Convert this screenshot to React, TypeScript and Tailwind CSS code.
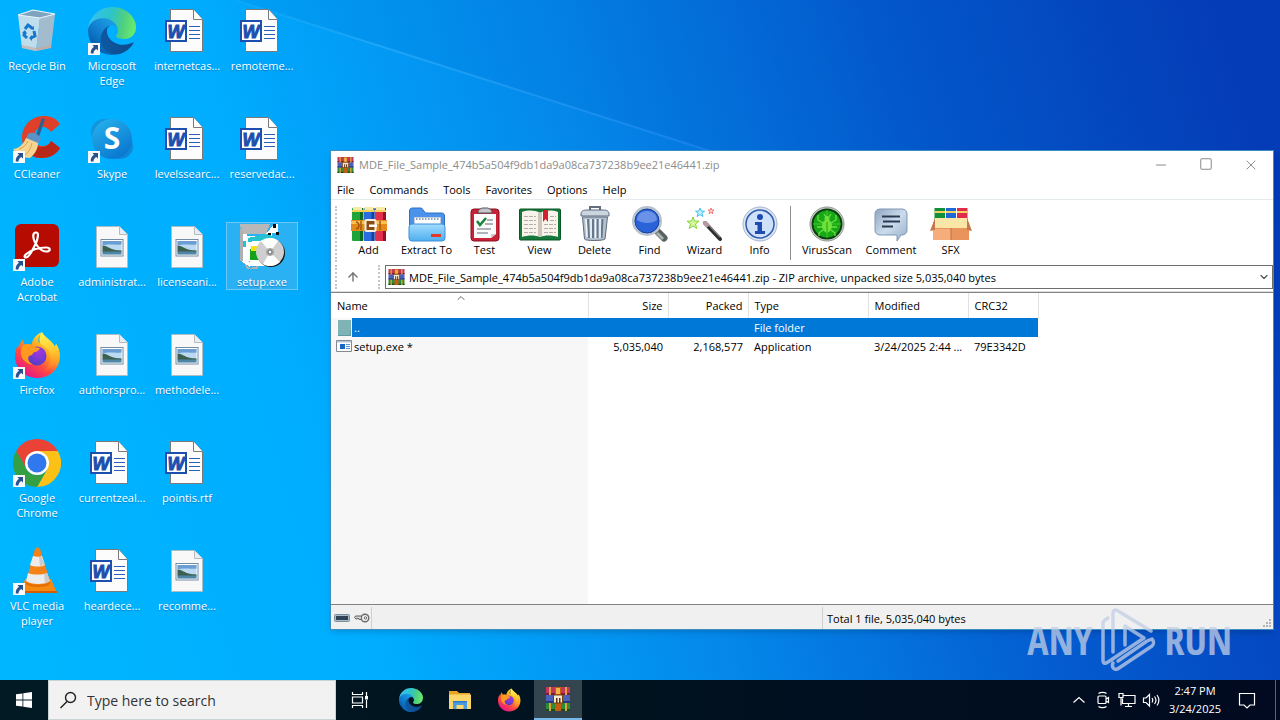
import type { ComponentType, ReactNode } from 'react';
import { ArrowUp, ChevronDown, ChevronUp, Minus, Square, X } from 'lucide-react';

const ARCHIVE_NAME = 'MDE_File_Sample_474b5a504f9db1da9a08ca737238b9ee21e46441.zip';

type IconProps = { className?: string };

/* ---------- App icons ---------- */

function EdgeIcon({ className }: IconProps) {
  return (
    <svg viewBox="0 0 256 256" className={className} aria-hidden="true">
      <defs>
        <linearGradient id="edgeDark" x1="63" y1="177" x2="241" y2="177" gradientUnits="userSpaceOnUse">
          <stop offset="0" stopColor="#0c59a4" />
          <stop offset="1" stopColor="#114a8b" />
        </linearGradient>
        <linearGradient id="edgeMid" x1="157" y1="100" x2="46" y2="221" gradientUnits="userSpaceOnUse">
          <stop offset="0" stopColor="#1b9de2" />
          <stop offset="0.4" stopColor="#1587d6" />
          <stop offset="1" stopColor="#0560b0" />
        </linearGradient>
        <linearGradient id="edgeTop" x1="10" y1="60" x2="245" y2="110" gradientUnits="userSpaceOnUse">
          <stop offset="0" stopColor="#35c1f1" />
          <stop offset="0.45" stopColor="#2dc4c8" />
          <stop offset="0.75" stopColor="#4fcf80" />
          <stop offset="1" stopColor="#66eb6e" />
        </linearGradient>
      </defs>
      <path
        fill="url(#edgeDark)"
        d="M235.68 190.5a93.73 93.73 0 0 1-10.54 4.71 101.87 101.87 0 0 1-35.9 6.46c-47.32 0-88.54-32.55-88.54-74.32A31.48 31.48 0 0 1 117.13 100c-42.8 1.8-53.8 46.4-53.8 72.53 0 73.88 68.09 81.37 82.76 81.37 7.91 0 19.84-2.3 27-4.56l1.31-.44a128.34 128.34 0 0 0 66.6-52.8 4 4 0 0 0-5.32-5.6Z"
      />
      <path
        fill="url(#edgeMid)"
        d="M105.73 241.42a79.2 79.2 0 0 1-22.74-21.34 80.72 80.72 0 0 1 29.53-120c3.12-1.47 8.45-4.05 15.54-3.95a32.35 32.35 0 0 1 25.69 13 31.88 31.88 0 0 1 6.36 18.66c0-.21 24.46-79.6-80-79.6-43.9 0-80 41.66-80 78.21a130.15 130.15 0 0 0 12.11 56 128 128 0 0 0 156.38 67.11 75.55 75.55 0 0 1-62.78-8.09Z"
      />
      <path
        fill="url(#edgeTop)"
        d="M152.33 148.86c-.81 1.05-3.3 2.5-3.3 5.66 0 2.61 1.7 5.12 4.72 7.23 14.38 10 41.49 8.68 41.56 8.68a59.56 59.56 0 0 0 30.27-8.35 61.38 61.38 0 0 0 30.43-52.88c.26-22.41-8-37.31-11.34-43.91C223.46 23.84 177.72 0 128 0A128 128 0 0 0 0 126.2c.48-36.54 36.8-66.05 80-66.05 3.5 0 23.46.34 42 10.07 16.34 8.58 24.9 18.94 30.85 29.21 6.18 10.67 7.28 24.15 7.28 29.52s-2.74 13.33-7.78 19.91Z"
      />
    </svg>
  );
}

function FirefoxIcon({ className }: IconProps) {
  return (
    <svg viewBox="0 0 48 48" className={className} aria-hidden="true">
      <defs>
        <linearGradient id="ffBody" x1="38" y1="6" x2="12" y2="44" gradientUnits="userSpaceOnUse">
          <stop offset="0" stopColor="#ffe83a" />
          <stop offset="0.35" stopColor="#ffa61e" />
          <stop offset="0.65" stopColor="#ff4a41" />
          <stop offset="1" stopColor="#e61587" />
        </linearGradient>
        <linearGradient id="ffFlame" x1="32" y1="2" x2="42" y2="40" gradientUnits="userSpaceOnUse">
          <stop offset="0" stopColor="#fff44f" />
          <stop offset="0.5" stopColor="#ffc530" />
          <stop offset="1" stopColor="#ff7a28" stopOpacity="0.2" />
        </linearGradient>
        <radialGradient id="ffGlobe" cx="0.6" cy="0.3" r="0.8">
          <stop offset="0" stopColor="#a236e0" />
          <stop offset="1" stopColor="#4a3fc4" />
        </radialGradient>
      </defs>
      <path
        fill="url(#ffBody)"
        d="M29 1c-2 3-4 5-3.500 10 3 .8 5.500 2 7.500 5l3-7c2.500 1.500 4.500 4 5.500 6.500 1-1 1.500-2 1.500-3 3.500 5 4.500 11 3.500 16.500C44.500 40 35.500 47 24.500 47 12 47 2 37.500 2 25c0-4.500 1.500-8.500 3-11.500l.8 3C6.500 13 8 10.500 10 8.500c0 2 .5 3.500 1.500 5 2-.8 4.500-.8 7 0 1-3.500 3-9.500 10.500-12.500Z"
      />
      <path
        fill="url(#ffFlame)"
        d="M29 1c2 4 6 6 8.500 9 5 5.500 8 10 8 17-2 7-8 12-15 13 5-4 8-9 7-15-1-7-6-9-10-12-2-4-1-9 1.500-12Z"
      />
      <circle cx="24" cy="25" r="9.500" fill="url(#ffGlobe)" />
      <path
        fill="#ff9a1f"
        d="M10 14c4-1.500 8-.5 11 2l6 1c-1 3-4 4-6.500 4.500-.5 2-2 3-4.500 3.500-2 3 0 7 4 8.500-6 0-11-4.500-12-10-.4-3.500.3-6.500 2-9.500Z"
      />
    </svg>
  );
}

function ChromeIcon({ className }: IconProps) {
  return (
    <svg viewBox="0 0 48 48" className={className} aria-hidden="true">
      <path fill="#ea4335" d="M24 24 3.200 12A24 24 0 0 1 44.800 12Z" />
      <path fill="#fbc116" d="M24 12H44.800A24 24 0 0 1 24 48L34.400 30Z" />
      <path fill="#ea4335" d="M3.200 12 13.600 30 24 24V12Z" />
      <path fill="#34a043" d="M3.200 12 13.600 30A12 12 0 0 0 34.400 30L24 48A24 24 0 0 1 3.200 12Z" />
      <circle cx="24" cy="24" r="12" fill="#fff" />
      <circle cx="24" cy="24" r="9.500" fill="#2f78ee" />
    </svg>
  );
}

function RecycleBinIcon({ className }: IconProps) {
  return (
    <svg viewBox="0 0 48 48" className={className} aria-hidden="true">
      <path fill="#dfe5ea" fillOpacity="0.85" d="M5 8 27 11 23 44 9 41Z" />
      <path fill="#b5bec8" fillOpacity="0.9" d="M27 11 42 7 38 41 23 44Z" />
      <path fill="#c9a79a" fillOpacity="0.6" d="M9 38 23 41 38 38 38 41 23 44 9 41Z" />
      <path fill="#7fa4c0" d="M5 8 20 3 42 7 27 11Z" />
      <path fill="none" stroke="#eef5fa" strokeWidth="1.200" d="M5 8 20 3 42 7 27 11Z" />
      <g fill="none" stroke="#1577cd" strokeWidth="3">
        <path d="m12 22 3-4 4 3" />
        <path d="m21 24 1 5-4 2" />
        <path d="m14 31-3-3 1-3" />
      </g>
      <path fill="#1577cd" d="m17 22 4 1 0-4ZM19 28v6l-3-3ZM9 26l3-3 2 4Z" />
    </svg>
  );
}

function CCleanerIcon({ className }: IconProps) {
  return (
    <svg viewBox="0 0 48 48" className={className} aria-hidden="true">
      <path
        fill="#e0402a"
        d="M47 9C43 3 37 1 31 1 18 1 9 11 9 23c0 12 8 20 19 20 8 0 15-3 19-10l-9-7c-2 4-5 5-9 5-5 0-8-4-8-9 0-6 4-10 9-10 3 0 6 2 8 5Z"
      />
      <path fill="#b92716" d="M47 33c-4 7-11 10-19 10-4 0-7-1-10-3l6-9c1 .7 3 1 5 1 4 0 7-2 9-6Z" />
      <path fill="none" stroke="#31608d" strokeWidth="3.500" strokeLinecap="round" d="M30 5 24 22" />
      <path fill="#5b93c8" d="M15 19c4-3 11 0 13 5l-3 5-12-5Z" />
      <path fill="#f7d590" d="m13 23 12 5c0 6-3 11-8 15-7 0-13-3-17-9 5 0 10-4 13-11Z" />
      <path fill="none" stroke="#d9a64e" d="M6 34c4-1 7-4 9-8m-3 14c4-3 6-7 7-12" />
    </svg>
  );
}

function SkypeIcon({ className }: IconProps) {
  return (
    <svg viewBox="0 0 48 48" className={className} aria-hidden="true">
      <defs>
        <linearGradient id="skypeBg" x1="0" y1="0" x2="0.6" y2="1">
          <stop offset="0" stopColor="#28b5ee" />
          <stop offset="1" stopColor="#0a79d0" />
        </linearGradient>
      </defs>
      <circle cx="16" cy="17" r="13" fill="#1494dd" />
      <circle cx="32" cy="31" r="13" fill="#1087d6" />
      <circle cx="24" cy="24" r="20" fill="url(#skypeBg)" />
      <text x="24" y="34" textAnchor="middle" fill="#fff" fontFamily="Open Sans" fontWeight="700" fontSize="30">
        S
      </text>
    </svg>
  );
}

function AcrobatIcon({ className }: IconProps) {
  return (
    <svg viewBox="0 0 48 48" className={className} aria-hidden="true">
      <rect x="2" y="1" width="44" height="43" rx="6" fill="#b50b00" />
      <path
        fill="none"
        stroke="#fff"
        strokeWidth="2.200"
        d="M23 9.500c-4 0-3 6-1 10 3 5 7 9 11 9 5 0 5-4 0-4-6 0-14 2-19 6-3 2-3 4-1 4 3 0 8-10 11-17 1-4 2-8-1-8Z"
      />
    </svg>
  );
}

function VlcIcon({ className }: IconProps) {
  return (
    <svg viewBox="0 0 48 48" className={className} aria-hidden="true">
      <path fill="#f68a10" d="M12 32h26l6 14H8Z" />
      <path fill="#d45c00" d="M8 44h36v2H7Z" />
      <path fill="#e46d05" d="M13 34h24v3c-3 4-21 4-24 0Z" />
      <path fill="#f58216" d="M22 2c1-2 4-2 5 0l10 32c-3 5-21 5-24 0Z" />
      <path fill="#ececec" d="M20 9c3 1 7 1 9 0l3 9c-3 2-11 2-15 0ZM15 26c5 2 14 2 19 0l3 8c-5 4-19 4-24 0Z" />
      <path fill="#bdbdbd" d="m28 9 4 9-5 1-1-9Zm3 18 3-1 3 8-5 3Z" opacity="0.7" />
    </svg>
  );
}

function WordDocIcon({ className }: IconProps) {
  return (
    <svg viewBox="0 0 48 48" className={className} aria-hidden="true">
      <path fill="#fcfcfc" stroke="#7a7a7a" d="M7.500 2.500h23l9 10v32h-32Z" />
      <path fill="#fff" stroke="#7a7a7a" d="M30.500 2.500v10h9" />
      <path stroke="#2b5fb8" strokeWidth="1.200" d="M26 19.500h11M26 23.500h11M26 27.500h11M26 31.500h11" />
      <rect x="3" y="14" width="20" height="20" fill="#fff" stroke="#1d4fae" strokeWidth="2" />
      <text
        x="13"
        y="30.500"
        textAnchor="middle"
        fill="#1d4fae"
        stroke="#1d4fae"
        fontFamily="Liberation Sans"
        fontStyle="italic"
        fontWeight="700"
        fontSize="18"
      >
        W
      </text>
    </svg>
  );
}

function ImageDocIcon({ className }: IconProps) {
  return (
    <svg viewBox="0 0 48 48" className={className} aria-hidden="true">
      <path fill="#f8f8f8" stroke="#b9b9b9" strokeWidth="0.800" d="M8.500 3.500h23l8 8v33h-31Z" />
      <path fill="#e3eef6" stroke="#b9b9b9" d="M31.500 3.500v8h8" />
      <rect x="13" y="16.500" width="22" height="16.500" fill="#fff" stroke="#748ca5" />
      <rect x="14.500" y="18" width="19" height="13.500" fill="#b9daf0" />
      <path fill="#6b9fd3" d="M14.500 18h19v3.500c-7 1-12-1-19 1Z" />
      <path fill="#3c5f50" d="M14.500 22.500c4 0 7 3 11 4 3 .8 5 .8 8 1v1.500h-19Z" />
      <path fill="#4f86a5" d="M14.500 28.500h19v3h-19Z" />
    </svg>
  );
}

function SetupIcon({ className }: IconProps) {
  return (
    <svg viewBox="0 0 48 48" className={className} aria-hidden="true" shapeRendering="crispEdges">
      <path fill="#b8b8b8" d="M2 1h30l-4 10H4Z" />
      <path fill="#fff" d="M2 11h7l3 33-8-5ZM28 11l8-10h4v9h-6v6h-6ZM9 13h19v30H12Z" />
      <path fill="#b0b0b0" d="M2 5h3v33H2ZM6 40l6 5 8-2v3H9Z" />
      <path fill="#0b0b0b" d="M35 1h3v4h-3Zm3 8h3v3h-3ZM30 10h3v5h-3Z" />
      <path fill="#25c2cf" d="M5 18h3v6H5Zm5-3 18-4 9 3v2l-27 3Z" />
      <path fill="#13a31b" d="M12 26h10v11H12Z" />
      <path fill="#f1e210" d="M13 23h10v5H13Z" />
      <g shapeRendering="auto">
        <circle cx="33" cy="30" r="14" fill="#151515" />
        <circle cx="32" cy="29" r="14" fill="#cfcfcf" />
        <path fill="#fff" d="M32 29 23 18c5-4 13-4 17 0ZM32 29 42 39c-5 5-12 5-17 2Z" />
        <circle cx="32" cy="29" r="4" fill="#a9a9a9" />
        <circle cx="32" cy="29" r="2" fill="#fff" stroke="#666" />
      </g>
    </svg>
  );
}

// Stack of three tied books, used for the archive and in the title bar
function WinRarIcon({ className }: IconProps) {
  return (
    <svg viewBox="0 0 24 24" className={className} aria-hidden="true">
      <path fill="#c2355c" d="M0 0h24v8H0Z" />
      <path fill="#4a62b8" d="M0 8h24v8H0Z" />
      <path fill="#2f8c34" d="M0 16h24v8H0Z" />
      <path fill="#7d1d3a" d="M0 6h24v2H0Z" />
      <path fill="#27397e" d="M0 14h24v2H0Z" />
      <path fill="#154f1b" d="M0 22h24v2H0Z" />
      <path fill="#e0a33c" d="M3 0h2v8H3Zm16 0h2v8h-2ZM3 16h2v8H3Zm16 0h2v8h-2Z" />
      <path fill="#c45d12" d="M9 0h6v24H9Z" />
      <path fill="#f4b445" d="M10 1h4v6h-4Z" />
      <rect x="7.500" y="8" width="9" height="8" fill="#f6ead2" stroke="#744012" />
      <path fill="#61300c" d="M10 11h1.500v5H10Zm3 0h1.500v5H13Z" />
    </svg>
  );
}

function ShortcutArrow() {
  return (
    <svg viewBox="0 0 12 12" className="absolute bottom-0 left-0 h-3 w-3" aria-hidden="true">
      <path fill="#f7f9fb" d="M0 0h12v12H0Z" />
      <path fill="#27518f" d="M4.500 2H10v5.500L8.300 6C6.500 7 5.500 8.500 5.500 10.500H2.800C2.300 7.500 4 5 6 3.700Z" />
    </svg>
  );
}

/* ---------- Toolbar icons ---------- */

const books = [
  { x: 1, light: '#1fa43a', dark: '#0c6d20' },
  { x: 12.5, light: '#2b6ce0', dark: '#173f9e' },
  { x: 24, light: '#e2304c', dark: '#951127' },
];

function AddIcon({ className }: IconProps) {
  return (
    <svg viewBox="0 0 36 36" className={className} aria-hidden="true">
      {books.map(({ x, light, dark }) => (
        <g key={x}>
          <rect x={x} y="2" width="11" height="33" rx="1" fill={light} />
          <rect x={x + 8} y="2" width="3" height="33" fill={dark} />
          <rect x={x} y="4" width="11" height="2" fill="#f3d35b" />
          <rect x={x + 1} y="1" width="9" height="3" fill="#f7e9a8" />
        </g>
      ))}
      <path fill="#e38a1a" d="M0 14h36v11H0Z" />
      <path fill="#f8c257" d="M0 15h36v3H0Z" />
      <path fill="none" stroke="#a7590b" strokeWidth="1.500" d="M5 16c4 1 4 6 0 7m5-8v9m19-9v9" />
      <rect x="14.500" y="14" width="10" height="11" rx="1" fill="#8a4c14" stroke="#f4efe2" strokeWidth="2" />
      <path fill="#fff" d="M18 18.500h8v2.500h-8Z" />
    </svg>
  );
}

function ExtractIcon({ className }: IconProps) {
  return (
    <svg viewBox="0 0 38 36" className={className} aria-hidden="true">
      <defs>
        <linearGradient id="folderFront" x1="0" y1="0" x2="0" y2="1">
          <stop offset="0" stopColor="#a3dcff" />
          <stop offset="1" stopColor="#4eafee" />
        </linearGradient>
      </defs>
      <path fill="#4b92ea" stroke="#2f6fc8" d="M1.500 5c0-2 1-3 3-3h9l4 5h16c2 0 3 1 3 3v20h-35Z" />
      <path fill="#fdfdfd" stroke="#c3cfdc" d="M6.500 11.500h26v10h-26Z" />
      <path stroke="#8ba3bb" strokeDasharray="1.500 1.500" strokeWidth="2" d="M8 13h23" />
      <rect x="1" y="18" width="36" height="17" rx="3" fill="url(#folderFront)" stroke="#3e8fdc" />
      <rect x="23" y="28" width="10" height="3" fill="#e23a24" />
    </svg>
  );
}

function TestIcon({ className }: IconProps) {
  return (
    <svg viewBox="0 0 30 36" className={className} aria-hidden="true">
      <rect x="1" y="3" width="28" height="32" rx="3" fill="#c92236" stroke="#8b1020" />
      <path fill="#fbfbfb" d="M4 8h22v20l-5 4H4Z" />
      <path fill="#c9ccd2" d="M26 28h-5v4Z" />
      <path fill="#c3c7cc" stroke="#55595e" d="M8 7c0-4 3-4 4-5h6c1 1 4 1 4 5Z" />
      <path fill="none" stroke="#19853a" strokeWidth="2.500" d="m7 15 3 4 6-7" />
      <path stroke="#969ba3" strokeWidth="1.300" d="M17 14h6M15 18h8M7 23h14M7 27h11" />
    </svg>
  );
}

function ViewIcon({ className }: IconProps) {
  return (
    <svg viewBox="0 0 42 36" className={className} aria-hidden="true">
      <rect x="0.500" y="3" width="41" height="31" rx="1" fill="#14793b" stroke="#0a5626" />
      <path fill="#f8f4ec" d="M3 6c6-2 13-2 18 1v24c-5-2-12-2-18 0ZM39 6c-6-2-13-2-18 1v24c5-2 12-2 18 0Z" />
      <path fill="#cfc8ba" d="M19 6h2v25l-2-1ZM21 7l2-1v24l-2 1Z" />
      <path
        stroke="#b3afa8"
        strokeDasharray="4 1"
        d="M5 10.500h12M5 14.500h12M5 18.500h12M5 22.500h12M5 26.500h12M31 10.500h6M31 14.500h6M25 18.500h12M25 22.500h12M25 26.500h12"
      />
      <path fill="#d3202f" d="M24 4h5v12l-2.500-3L24 16Z" />
    </svg>
  );
}

function DeleteIcon({ className }: IconProps) {
  return (
    <svg viewBox="0 0 32 36" className={className} aria-hidden="true">
      <path fill="none" stroke="#636f7d" strokeWidth="2" d="M11 4V1h10v3" />
      <path fill="#cbd5df" stroke="#5c6a7b" d="M2 8c0-4 4-4 7-4h14c3 0 7 0 7 4v2H2Z" />
      <path fill="#b3c1cf" stroke="#5c6a7b" d="m3.500 11 2 22c0 2 19 2 20.500 0l2.500-22Z" />
      <path stroke="#66788c" strokeWidth="2" d="m9 13 1 19M14 13v19M18.500 13v19M23.500 13 22.500 32" />
      <path stroke="#f3f7fa" strokeWidth="1.500" d="m7 13 1 18M12 13v19M16.500 13v19M21 13v19" />
    </svg>
  );
}

function FindIcon({ className }: IconProps) {
  return (
    <svg viewBox="0 0 38 36" className={className} aria-hidden="true">
      <path stroke="#59625f" strokeWidth="7" strokeLinecap="round" d="m27 26 6 6" />
      <path stroke="#a7b3ae" strokeWidth="3" d="m26 27 6 6" />
      <circle cx="16" cy="15" r="13.500" fill="#1c51c4" stroke="#b7c2cf" strokeWidth="3" />
      <circle cx="16" cy="15" r="12" fill="#2a62d8" stroke="#17429e" />
      <path fill="#84a7ef" opacity="0.7" d="M6 14c0-12 20-12 20 0-5 4-14 4-20 0Z" />
    </svg>
  );
}

function WizardIcon({ className }: IconProps) {
  return (
    <svg viewBox="0 0 36 36" className={className} aria-hidden="true">
      <path stroke="#2e2e2e" strokeWidth="4" strokeLinecap="round" d="m18 17 15 16" />
      <path stroke="#888" strokeWidth="1.300" d="m19 16 14 15" />
      <path stroke="#b59aa2" strokeWidth="4" strokeLinecap="round" d="m18 17 2 2" />
      <path fill="#d6f79a" stroke="#83d63a" d="m6 11 1.500 4 4.500.2-3.500 2.800 1.200 4.500L6 20l-3.700 2.500L3.500 18 0 15.200l4.500-.2Z" />
      <path fill="#c0f2ff" stroke="#45c2ea" d="m13 2 1.200 3 3.300.2-2.600 2 1 3.300-2.900-1.900-2.900 1.900 1-3.300-2.600-2 3.300-.2Z" />
      <path fill="#ffd7d7" stroke="#f07878" d="m24 2 .8 2 2.200.1-1.700 1.400.6 2.200-1.900-1.300-1.900 1.300.6-2.200L21 4.100l2.200-.1Z" />
    </svg>
  );
}

function InfoIcon({ className }: IconProps) {
  return (
    <svg viewBox="0 0 36 36" className={className} aria-hidden="true">
      <circle cx="18" cy="18" r="17" fill="#dde7f3" stroke="#a3b4cd" />
      <circle cx="18" cy="18" r="14" fill="#cfe0fa" stroke="#2e5cad" strokeWidth="1.500" />
      <circle cx="18" cy="11" r="3" fill="#1c4bb1" />
      <path fill="#1c4bb1" d="M13 16h7v9h3v3H13v-3h2.500v-6H13Z" />
    </svg>
  );
}

function VirusIcon({ className }: IconProps) {
  return (
    <svg viewBox="0 0 36 36" className={className} aria-hidden="true">
      <circle cx="18" cy="18" r="17" fill="#c7d0c7" stroke="#8e998f" />
      <circle cx="18" cy="18" r="14.500" fill="#17a81a" stroke="#0d3d10" strokeWidth="2" />
      <path stroke="#63de37" d="M4 18h28M18 4v28" opacity="0.6" />
      <ellipse cx="18" cy="20" rx="5" ry="6.500" fill="#6fe03a" />
      <circle cx="18" cy="12.500" r="2.500" fill="#6fe03a" />
      <path
        fill="none"
        stroke="#6fe03a"
        strokeWidth="1.300"
        d="m14 17-5-3V9m5 12H8m6 3-4 3v3m12-13 5-3V9m-5 12h6m-6 3 4 3v3m-9-19-2-3m5 3 2-3"
      />
      <path stroke="#17a81a" d="M18 16v10" />
    </svg>
  );
}

function CommentIcon({ className }: IconProps) {
  return (
    <svg viewBox="0 0 34 36" className={className} aria-hidden="true">
      <defs>
        <linearGradient id="bubble" x1="0" y1="0" x2="1" y2="1">
          <stop offset="0" stopColor="#8fa4c0" />
          <stop offset="0.5" stopColor="#cbdcec" />
          <stop offset="1" stopColor="#96adc9" />
        </linearGradient>
      </defs>
      <path fill="url(#bubble)" stroke="#8398b5" d="M6 3h22c3 0 5 2 5 5v16c0 3-2 5-5 5h-1l-4 6v-6H6c-3 0-5-2-5-5V8c0-3 2-5 5-5Z" />
      <path stroke="#2a3a52" strokeWidth="1.800" d="M8 10.500h18M9 15.500h17M8 20.500h11" />
    </svg>
  );
}

function SfxIcon({ className }: IconProps) {
  return (
    <svg viewBox="0 0 42 36" className={className} aria-hidden="true">
      <path fill="#13913a" d="M4.500 2h10.500v12H4.500Z" />
      <path fill="#1f66d6" d="M16 2h10v12H16Z" />
      <path fill="#df2b4c" d="M27 2h10.500v12H27Z" />
      <path fill="#f3d35b" d="M4.500 5h10.500v2H4.500ZM16 5h10v2H16Zm11 0h10.500v2H27Z" />
      <path fill="#e9935d" d="M3 16h36v18H3Z" />
      <path fill="#f5ae7b" d="M3 23h18v11H3Z" />
      <path fill="#fae7a8" d="M5 12h32v10H5Z" />
      <path fill="#c8774a" d="m5 12-5 13 5-1Zm32 0 5 13-5-1Z" />
      <path stroke="#c56f3f" d="M21 22v12" />
    </svg>
  );
}

/* ---------- Desktop ---------- */

type Shortcut = {
  label: string;
  icon: ComponentType<IconProps>;
  shortcut?: boolean;
  selected?: boolean;
};

// One array per desktop column, top to bottom
const desktopColumns: Shortcut[][] = [
  [
    { label: 'Recycle Bin', icon: RecycleBinIcon },
    { label: 'CCleaner', icon: CCleanerIcon, shortcut: true },
    { label: 'Adobe Acrobat', icon: AcrobatIcon, shortcut: true },
    { label: 'Firefox', icon: FirefoxIcon, shortcut: true },
    { label: 'Google Chrome', icon: ChromeIcon, shortcut: true },
    { label: 'VLC media player', icon: VlcIcon, shortcut: true },
  ],
  [
    { label: 'Microsoft Edge', icon: EdgeIcon, shortcut: true },
    { label: 'Skype', icon: SkypeIcon, shortcut: true },
    { label: 'administrat...', icon: ImageDocIcon },
    { label: 'authorspro...', icon: ImageDocIcon },
    { label: 'currentzeal...', icon: WordDocIcon },
    { label: 'heardece...', icon: WordDocIcon },
  ],
  [
    { label: 'internetcas...', icon: WordDocIcon },
    { label: 'levelssearc...', icon: WordDocIcon },
    { label: 'licenseani...', icon: ImageDocIcon },
    { label: 'methodele...', icon: ImageDocIcon },
    { label: 'pointis.rtf', icon: WordDocIcon },
    { label: 'recomme...', icon: ImageDocIcon },
  ],
  [
    { label: 'remoteme...', icon: WordDocIcon },
    { label: 'reservedac...', icon: WordDocIcon },
    { label: 'setup.exe', icon: SetupIcon, selected: true },
  ],
];

function DesktopIcon({ label, icon: Icon, shortcut, selected }: Shortcut) {
  return (
    <div className="h-[108px] pt-1.5">
      <button
        type="button"
        className={`flex w-[72px] flex-col items-center gap-[3px] border text-white ${
          selected ? 'border-[#6cc8f8] bg-[#29b1f3]' : 'border-transparent'
        }`}
      >
        <span className="relative block h-12 w-12">
          <Icon className="h-12 w-12" />
          {shortcut && <ShortcutArrow />}
        </span>
        <span className="px-1 text-[11px] leading-[15px] [text-shadow:0_1px_1px_rgba(0,50,110,0.4)]">{label}</span>
      </button>
    </div>
  );
}

function Wallpaper() {
  return (
    <svg viewBox="0 0 1280 680" preserveAspectRatio="none" className="absolute inset-0 h-full w-full" aria-hidden="true">
      <defs>
        <linearGradient id="sky" x1="0" y1="560" x2="1280" y2="180" gradientUnits="userSpaceOnUse">
          <stop offset="0" stopColor="#00b6ff" />
          <stop offset="0.25" stopColor="#00adff" />
          <stop offset="0.5" stopColor="#0488ea" />
          <stop offset="0.75" stopColor="#045ace" />
          <stop offset="1" stopColor="#053cb8" />
        </linearGradient>
        <linearGradient id="ray" x1="240" y1="0" x2="710" y2="150" gradientUnits="userSpaceOnUse">
          <stop offset="0" stopColor="#3ab6ff" stopOpacity="0.2" />
          <stop offset="0.3" stopColor="#3ab6ff" stopOpacity="0.5" />
          <stop offset="1" stopColor="#2a8df5" stopOpacity="0.5" />
        </linearGradient>
      </defs>
      <path fill="url(#sky)" d="M0 0h1280v680H0Z" />
      <path fill="#0030a0" opacity="0.06" d="M235 0h1045v333Z" />
      <path stroke="url(#ray)" strokeWidth="2" d="M235 0 710 151" />
    </svg>
  );
}

/* ---------- Archive window ---------- */

const menus = ['File', 'Commands', 'Tools', 'Favorites', 'Options', 'Help'];

type Tool = { label: string; icon: ComponentType<IconProps>; width: string };

const fileTools: Tool[] = [
  { label: 'Add', icon: AddIcon, width: 'w-[55px]' },
  { label: 'Extract To', icon: ExtractIcon, width: 'w-[61px]' },
  { label: 'Test', icon: TestIcon, width: 'w-[55px]' },
  { label: 'View', icon: ViewIcon, width: 'w-[55px]' },
  { label: 'Delete', icon: DeleteIcon, width: 'w-[55px]' },
  { label: 'Find', icon: FindIcon, width: 'w-[55px]' },
  { label: 'Wizard', icon: WizardIcon, width: 'w-[55px]' },
  { label: 'Info', icon: InfoIcon, width: 'w-[55px]' },
];

const extraTools: Tool[] = [
  { label: 'VirusScan', icon: VirusIcon, width: 'w-16' },
  { label: 'Comment', icon: CommentIcon, width: 'w-16' },
  { label: 'SFX', icon: SfxIcon, width: 'w-[55px]' },
];

function ToolButton({ label, icon: Icon, width }: Tool) {
  return (
    <button type="button" className={`flex flex-col items-center whitespace-nowrap ${width}`}>
      <Icon className="h-9" />
      <span className="leading-4">{label}</span>
    </button>
  );
}

function HeaderCell({ children, right }: { children: ReactNode; right?: boolean }) {
  return (
    <th
      scope="col"
      className={`border-r border-[#e2e2e2] bg-white font-normal ${right ? 'pr-[5px] text-right' : 'pl-1.5 text-left'}`}
    >
      {children}
    </th>
  );
}

function FileTable() {
  return (
    <table className="w-[707px] table-fixed border-collapse">
      <colgroup>
        <col className="w-[257px]" />
        <col className="w-20" />
        <col className="w-20" />
        <col className="w-[120px]" />
        <col className="w-[100px]" />
        <col className="w-[70px]" />
      </colgroup>
      <thead>
        <tr className="h-[25px]">
          <HeaderCell>
            <span className="relative block">
              Name
              <ChevronUp className="absolute -top-1.5 left-[118px] h-3 w-3 text-[#666]" strokeWidth={2} />
            </span>
          </HeaderCell>
          <HeaderCell right>Size</HeaderCell>
          <HeaderCell right>Packed</HeaderCell>
          <HeaderCell>Type</HeaderCell>
          <HeaderCell>Modified</HeaderCell>
          <HeaderCell>CRC32</HeaderCell>
        </tr>
      </thead>
      <tbody>
        <tr className="h-[19px] bg-[#0078d7] text-white">
          <td className="p-0">
            <div className="flex h-[19px] items-center">
              <span className="flex h-full w-[21px] items-center justify-end bg-[#f7f7f7] pr-px">
                <svg viewBox="0 0 13 16" className="h-4" aria-hidden="true">
                  <path fill="#7fb3b5" d="M0 0h13v16H0Z" />
                  <path fill="#5e9a9f" d="M0 15h13v1H0Zm12-5h1v5h-1Z" />
                </svg>
              </span>
              <span className="pl-0.5">..</span>
            </div>
          </td>
          <td />
          <td />
          <td className="pl-1.5">File folder</td>
          <td />
          <td />
        </tr>
        <tr className="h-[19px]">
          <td className="p-0">
            <div className="flex items-center gap-0.5 pl-[5px]">
              <svg viewBox="0 0 16 13" className="h-[13px] w-4" aria-hidden="true">
                <path fill="#fff" stroke="#838a91" d="M.5.5h15v11H.5Z" />
                <path fill="#b9c6d3" d="M1 1h14v1.500H1Z" />
                <path fill="#1769c6" d="M4 4h5v5H4Z" />
                <path stroke="#5d9bd8" d="M10 4.500h4M10 6.500h4M10 8.500h4" />
              </svg>
              setup.exe *
            </div>
          </td>
          <td className="pr-[5px] text-right">5,035,040</td>
          <td className="pr-[5px] text-right">2,168,577</td>
          <td className="pl-1.5">Application</td>
          <td className="pl-1.5">3/24/2025 2:44 ...</td>
          <td className="pl-1.5">79E3342D</td>
        </tr>
      </tbody>
    </table>
  );
}

function ArchiveWindow() {
  return (
    <section
      aria-label={ARCHIVE_NAME}
      className="absolute top-[150px] right-1.5 bottom-[50px] left-[330px] flex flex-col border border-[#3a8fc0] bg-white text-[11px] leading-4 whitespace-nowrap text-black shadow-md"
    >
      <header className="flex h-7 shrink-0 items-center pl-1.5">
        <WinRarIcon className="h-4 w-[17px]" />
        <h1 className="flex-1 pl-[5px] text-[#8c8c8c]">{ARCHIVE_NAME}</h1>
        <div className="flex text-[#8c8c8c]">
          <button type="button" aria-label="Minimize" className="flex w-[45px] justify-center">
            <Minus className="h-4 w-4" strokeWidth={1.5} />
          </button>
          <button type="button" aria-label="Maximize" className="flex w-[45px] justify-center">
            <Square className="h-3.5 w-3.5" strokeWidth={1.75} />
          </button>
          <button type="button" aria-label="Close" className="flex w-[45px] justify-center">
            <X className="h-4 w-4" strokeWidth={1.5} />
          </button>
        </div>
      </header>

      <nav className="flex h-[21px] shrink-0 items-center gap-[15px] border-b border-[#e4ecee] pt-0.5 pl-1.5">
        {menus.map((menu) => (
          <button key={menu} type="button">
            {menu}
          </button>
        ))}
      </nav>

      <div className="flex h-[65px] shrink-0 items-start pt-1.5 pl-1">
        <div className="mr-1 h-[56px] border-l-2 border-dotted border-[#c4c4c4]" />
        {fileTools.map((tool) => (
          <ToolButton key={tool.label} {...tool} />
        ))}
        <div className="mr-1 ml-[3px] h-[54px] w-px bg-[#8d8d8d]" />
        {extraTools.map((tool) => (
          <ToolButton key={tool.label} {...tool} />
        ))}
      </div>

      <div className="flex h-[27px] shrink-0 items-start border-b border-[#dcdcdc] pl-1">
        <div className="h-6 border-l-2 border-dotted border-[#c4c4c4]" />
        <button type="button" aria-label="Up one level" className="flex h-6 w-[31px] items-center justify-center text-[#777]">
          <ArrowUp className="h-3.5 w-3.5" strokeWidth={2.5} />
        </button>
        <div className="mr-[5px] ml-2.5 h-6 border-l-2 border-dotted border-[#c4c4c4]" />
        <div className="relative flex h-6 flex-1 items-center border border-[#6e6e6e]">
          <WinRarIcon className="ml-0.5 h-4 w-[17px] shrink-0" />
          <select aria-label="Archive path" className="h-full w-full appearance-none bg-transparent pt-px pl-1 outline-none">
            <option>{ARCHIVE_NAME} - ZIP archive, unpacked size 5,035,040 bytes</option>
          </select>
          <ChevronDown className="pointer-events-none absolute right-0.5 h-3 w-3 text-[#555]" strokeWidth={2.5} />
        </div>
      </div>

      <div className="min-h-0 flex-1 overflow-hidden border-y border-[#828282] bg-[linear-gradient(to_right,#f7f7f7_257px,#ffffff_257px)]">
        <FileTable />
      </div>

      <footer className="flex h-6 shrink-0 items-stretch bg-[#f0f0f0] pt-0.5">
        <div className="flex w-[41px] items-center gap-1 border-r border-[#d0d0d0] pl-[3px]">
          <svg viewBox="0 0 16 8" className="h-2 w-4" aria-hidden="true">
            <rect x="0.500" y="0.500" width="15" height="7" rx="1" fill="#a9bccb" stroke="#7e8f9c" />
            <path fill="#2f4355" d="M2 2h12v4H2Z" />
          </svg>
          <svg viewBox="0 0 16 10" className="h-2.5 w-4" aria-hidden="true">
            <circle cx="11" cy="5" r="3.800" fill="#ececec" stroke="#6a6a6a" strokeWidth="1.400" />
            <circle cx="11.500" cy="5" r="1.200" fill="#fff" stroke="#6a6a6a" />
            <path fill="#d0d0d0" stroke="#5f5f5f" d="M7 3H1.500L.5 4.500 2 6h1l1-1 1 1.500h2" />
          </svg>
        </div>
        <div className="flex-1 border-r border-[#d0d0d0]" />
        <div className="flex w-[450px] items-center pt-0.5 pl-1">Total 1 file, 5,035,040 bytes</div>
        <svg viewBox="0 0 9 9" className="absolute right-px bottom-px h-[9px] w-[9px]" aria-hidden="true">
          <path fill="#b4b4b4" d="M6 0h2v2H6ZM3 3h2v2H3Zm3 0h2v2H6ZM0 6h2v2H0Zm3 0h2v2H3Zm3 0h2v2H6Z" />
        </svg>
      </footer>
    </section>
  );
}

function Watermark() {
  return (
    <div
      className="pointer-events-none absolute right-[48px] bottom-2 flex items-center gap-2 text-[40px] leading-none font-light text-[#c3cfe6] opacity-75"
      style={{
        fontFamily:
          '"Noto Sans ExtraCondensed", "Noto Sans Condensed", "Open Sans Condensed", "Roboto Condensed", "Liberation Sans Narrow", "Open Sans", sans-serif',
      }}
    >
      <span>ANY</span>
      <svg viewBox="0 0 56 64" className="h-16 w-14" fill="none" stroke="currentColor" strokeWidth="3.500" strokeLinejoin="round" strokeLinecap="round" aria-hidden="true">
        <path d="M13 44V6c0-4 2-5 5-3l33 20" />
        <path d="M8 10 5 12c-2 1-2 2-2 4v36c0 4 2 4 5 2l36-24-19-12v19" />
        <path d="M13 55c-2 5 2 8 6 5l33-22c2-2 2-5 0-7l-5 2-29 20" />
      </svg>
      <span>RUN</span>
    </div>
  );
}

/* ---------- Taskbar ---------- */

function TrayButton({ label, children }: { label: string; children: ReactNode }) {
  return (
    <button type="button" aria-label={label} className="flex h-full w-6 items-center justify-center">
      <svg viewBox="0 0 18 18" className="h-[18px] w-[18px]" fill="none" stroke="#fff" strokeWidth="1.200" aria-hidden="true">
        {children}
      </svg>
    </button>
  );
}

function Taskbar() {
  return (
    <footer className="flex h-10 shrink-0 items-stretch bg-linear-to-r from-[#011a24] via-[#01121f] to-[#010a20] text-white">
      <button type="button" aria-label="Start" className="flex w-12 items-center justify-center">
        <svg viewBox="0 0 16 16" className="h-4 w-4" fill="#fff" aria-hidden="true">
          <path d="M0 2.300 6.500 1.400v6.200H0ZM7.300 1.300 16 0v7.600H7.300ZM0 8.400h6.500v6.200L0 13.700ZM7.300 8.400H16V16l-8.700-1.300Z" />
        </svg>
      </button>
      <label className="flex w-72 items-center gap-2.5 border border-[#c9d3d6] bg-[#f2f2f2] pl-2.5 text-[#222]">
        <svg viewBox="0 0 18 18" className="h-[18px] w-[18px] shrink-0" fill="none" stroke="#222" strokeWidth="1.400" aria-hidden="true">
          <circle cx="11.500" cy="6.500" r="5" />
          <path d="m8 10.500-6.500 6.500" />
        </svg>
        <input
          type="text"
          aria-label="Search"
          placeholder="Type here to search"
          className="w-full bg-transparent text-[14px] outline-none placeholder:text-[#333]"
        />
      </label>
      <div className="flex gap-px">
        <button type="button" aria-label="Task View" className="flex w-[50px] items-center justify-center pr-0.5">
          <svg viewBox="0 0 18 18" className="h-[18px] w-[18px]" fill="none" stroke="#fff" strokeWidth="1.200" aria-hidden="true">
            <path d="M1.500 1v2.500h10V1M1.500 17v-2.500h10V17M1.500 6h10v6h-10ZM15.500 1v4M15.500 9v8" />
            <path fill="#fff" stroke="none" d="M14 5h3v3.500h-3Z" />
          </svg>
        </button>
        <button type="button" aria-label="Microsoft Edge" className="flex w-12 items-center justify-center">
          <EdgeIcon className="h-6 w-6" />
        </button>
        <button type="button" aria-label="File Explorer" className="flex w-12 items-center justify-center">
          <svg viewBox="0 0 24 24" className="h-6 w-6" aria-hidden="true">
            <path fill="#e9a327" d="M1 3h8l2 2h11v4H1Z" />
            <path fill="#fbd76b" d="M1 6.500h22V21H1Z" />
            <path fill="#4a9be0" d="M5 13h14v8h-3.500v-4h-7v4H5Z" />
            <path fill="#2b7bc8" d="M5 13h14v1.500H5Z" />
          </svg>
        </button>
        <button type="button" aria-label="Firefox" className="flex w-12 items-center justify-center">
          <FirefoxIcon className="h-6 w-6" />
        </button>
        <button
          type="button"
          aria-label="WinRAR"
          className="flex w-12 items-center justify-center border-b-2 border-[#76b9ed] bg-[#344550]"
        >
          <WinRarIcon className="h-6 w-6" />
        </button>
      </div>

      <div className="ml-auto flex items-center text-[11px] leading-[18px]">
        <TrayButton label="Show hidden icons">
          <path d="m3.500 11.500 5.500-5 5.500 5" />
        </TrayButton>
        <TrayButton label="Meet Now">
          <path d="M5 5h6c.6 0 1 .4 1 1v5.500c0 .6-.4 1-1 1H5c-.6 0-1-.4-1-1V6c0-.6.4-1 1-1ZM12 8l2.500-1.500v5L12 10M4.500 2.500c2-1.500 6-1.500 8 0M4.500 15.500c2 1.500 6 1.500 8 0" />
        </TrayButton>
        <TrayButton label="Network">
          <path d="M5 4.500h12v8H4.500v-5M10.500 12.500v3M7 15.500h7M1 2.500h4v4H1ZM3 6.500v8" />
        </TrayButton>
        <TrayButton label="Volume">
          <path d="M1.500 7v4.500h2.500l3.500 3.500V3.500L4 7ZM10 7c1 1.500 1 3 0 4.500M12.500 5.500c2 2.500 2 5 0 7.500M15 4c2.500 3.500 2.500 7 0 10.500" />
        </TrayButton>
        <time dateTime="2025-03-24T14:47" className="w-16 text-center">
          2:47 PM
          <br />
          3/24/2025
        </time>
        <button type="button" aria-label="Notifications" className="flex w-12 items-center justify-center pr-2">
          <svg viewBox="0 0 18 18" className="h-[18px] w-[18px]" fill="none" stroke="#fff" strokeWidth="1.200" aria-hidden="true">
            <path d="M1.500 2.500h15V14H12l-3 3-3-3H1.500Z" />
          </svg>
        </button>
        <button type="button" aria-label="Show desktop" className="h-full w-[5px] border-l border-[#5a6672]" />
      </div>
    </footer>
  );
}

export default function App() {
  return (
    <div
      className="flex min-h-screen flex-col overflow-hidden select-none"
      style={{ fontFamily: '"Open Sans", "Noto Sans", sans-serif' }}
    >
      <main className="relative flex-1 overflow-hidden bg-[#00a8ff]">
        <Wallpaper />
        <div className="relative flex gap-[3px] pl-px">
          {desktopColumns.map((column) => (
            <div key={column[0].label}>
              {column.map((item) => (
                <DesktopIcon key={item.label} {...item} />
              ))}
            </div>
          ))}
        </div>
        <ArchiveWindow />
        <Watermark />
      </main>
      <Taskbar />
    </div>
  );
}
